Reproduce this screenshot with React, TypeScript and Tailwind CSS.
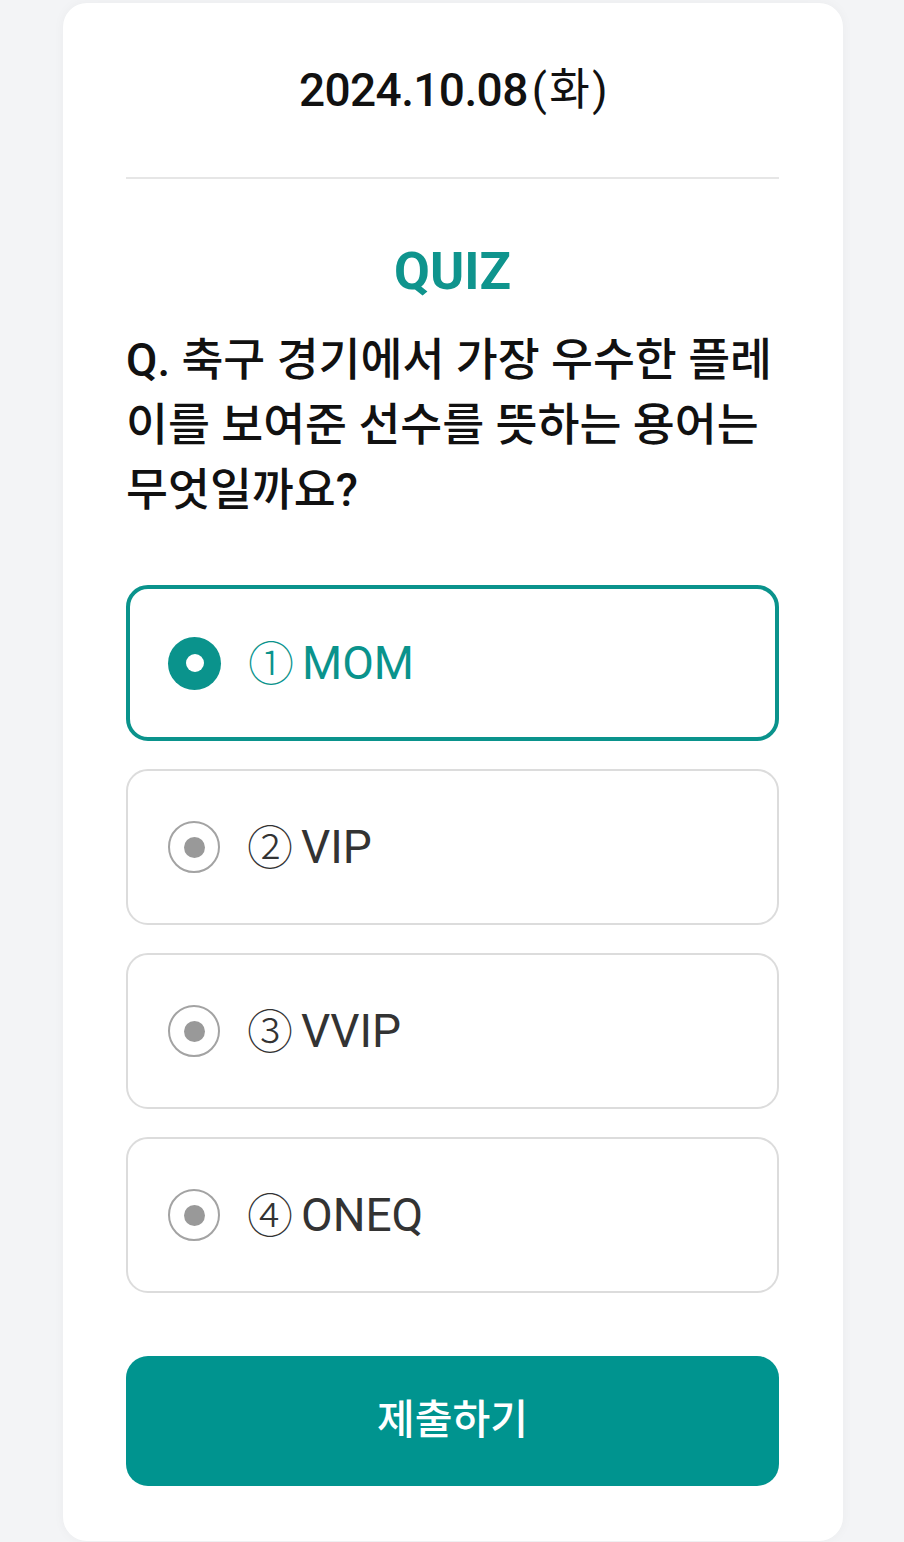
const options = [
  { no: '①', label: 'MOM' },
  { no: '②', label: 'VIP' },
  { no: '③', label: 'VVIP' },
  { no: '④', label: 'ONEQ' },
];

function Radio({ checked }: { checked: boolean }) {
  if (checked) {
    return (
      <span className="flex h-[53px] w-[53px] shrink-0 items-center justify-center rounded-full bg-[#0a938c]">
        <span className="h-[18px] w-[18px] rounded-full bg-white" />
      </span>
    );
  }
  return (
    <span className="flex h-[52px] w-[52px] shrink-0 items-center justify-center rounded-full border-2 border-[#a3a3a3]">
      <span className="h-[21px] w-[21px] rounded-full bg-[#999999]" />
    </span>
  );
}

export default function App() {
  const selected = 0;
  return (
    <div className="min-h-screen bg-[#f3f4f6] font-['Roboto','Noto_Sans_CJK_KR',sans-serif]">
      <div className="ml-[63px] w-[780px] pt-[3px]">
        <div className="rounded-[24px] bg-white pr-[64px] pl-[63px] pb-[55px] shadow-[0_0_12px_rgba(0,0,0,0.04)]">
          {/* date */}
          <div className="flex h-[176px] items-center justify-center border-b-2 border-[#e6e6e6] text-[#111]">
            <span className="ml-[4px] text-[46px] font-medium tracking-[-0.6px]">2024.10.08</span>
            <span className="ml-[4px] text-[44px] font-normal tracking-[2.5px]">(화)</span>
          </div>

          {/* quiz */}
          <div className="mt-[67px] text-center text-[52px] leading-[1] font-bold text-[#0f948d]">QUIZ</div>
          <p className="mt-[30px] text-[45.6px] leading-[65px] font-medium break-all text-[#111]">
            Q. 축구 경기에서 가장 우수한 플레이를 보여준 선수를 뜻하는 용어는 무엇일까요?
          </p>

          {/* options */}
          <div className="mt-[62px] flex flex-col gap-[28px]">
            {options.map((o, i) => {
              const on = i === selected;
              return (
                <div
                  key={o.label}
                  className={
                    on
                      ? 'flex h-[156px] items-center gap-[27px] rounded-[22px] border-[4px] border-[#0a938c] pl-[38px] text-[#0a938c]'
                      : 'flex h-[156px] items-center gap-[27px] rounded-[22px] border-2 border-[#dcdcdc] pl-[40px] text-[#333]'
                  }
                >
                  <Radio checked={on} />
                  <span className="flex items-center text-[46px] leading-none">
                    <span className="-mt-[6px] font-['Noto_Sans_CJK_KR',sans-serif] font-light">{o.no}</span>
                    <span className="ml-[8px]">{o.label}</span>
                  </span>
                </div>
              );
            })}
          </div>

          <button className="mt-[63px] flex h-[130px] w-full items-center justify-center rounded-[22px] bg-[#00948f] text-[41px] font-medium text-white">
            제출하기
          </button>
        </div>
      </div>
    </div>
  );
}
